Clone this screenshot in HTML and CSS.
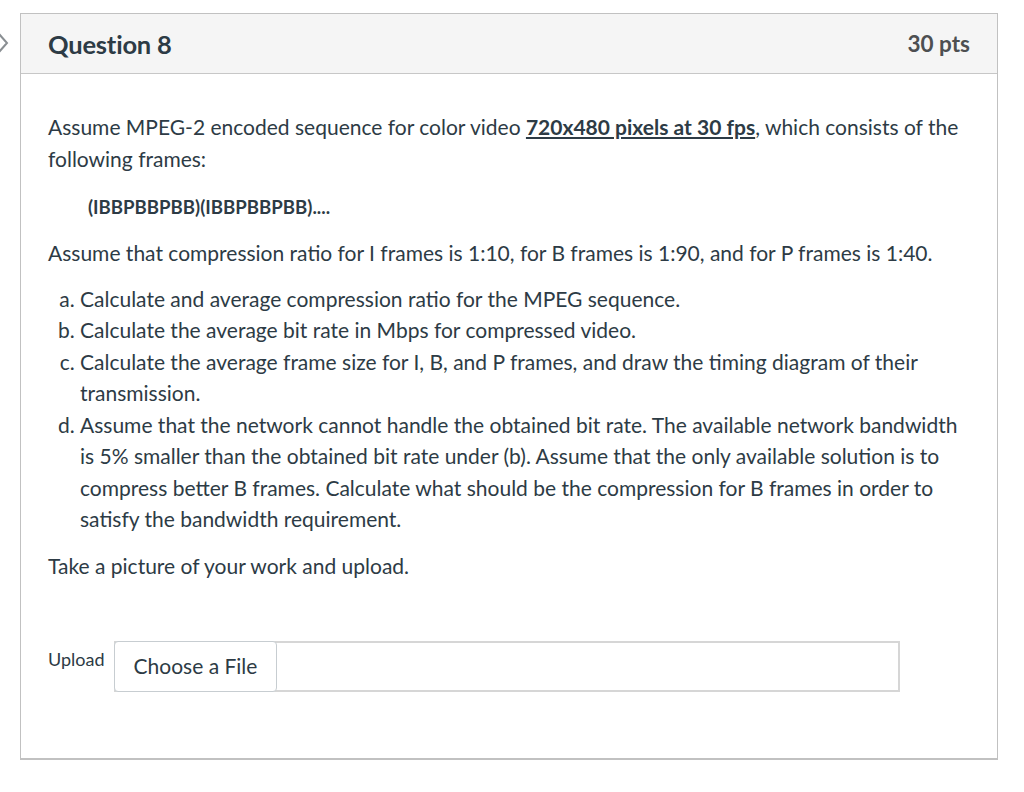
FILE: index.html
```html
<!DOCTYPE html>
<html>
<head>
<meta charset="utf-8">
<link rel="stylesheet" href="styles.css">
</head>
<body>
<div class="page">
  <div class="chev">
    <svg width="12" height="22" viewBox="0 0 12 22"><path d="M1 2 L9 11 L1 20" fill="none" stroke="#8a8f93" stroke-width="2"/></svg>
  </div>
  <div class="card">
    <div class="header">
      <div class="title">Question 8</div>
      <div class="pts">30 pts</div>
    </div>
    <div class="body">
      <p class="p1">Assume MPEG-2 encoded sequence for color video <a class="lnk">720x480 pixels at 30 fps</a>, which consists of the following frames:</p>
      <p class="seq">(IBBPBBPBB)(IBBPBBPBB)....</p>
      <p class="p2">Assume that compression ratio for I frames is 1:10, for B frames is 1:90, and for P frames is 1:40.</p>
      <ol class="list">
        <li>Calculate and average compression ratio for the MPEG sequence.</li>
        <li>Calculate the average bit rate in Mbps for compressed video.</li>
        <li>Calculate the average frame size for I, B, and P frames, and draw the timing diagram of their transmission.</li>
        <li>Assume that the network cannot handle the obtained bit rate. The available network bandwidth is 5% smaller than the obtained bit rate under (b). Assume that the only available solution is to compress better B frames. Calculate what should be the compression for B frames in order to satisfy the bandwidth requirement.</li>
      </ol>
      <p class="p3">Take a picture of your work and upload.</p>
      <div class="upload">
        <div class="ulabel">Upload</div>
        <div class="ufield"><div class="ubtn">Choose a File</div></div>
      </div>
    </div>
  </div>
</div>
</body>
</html>
```
FILE: styles.css
```css
html, body { margin: 0; padding: 0; background: #fff; }
body { font-family: Lato, "Liberation Sans", sans-serif; color: #2d3b45; }
.page { display: flex; align-items: flex-start; padding-top: 13px; }
.chev { width: 20px; height: 60px; display: flex; align-items: center; }
.chev svg { margin-left: -2px; }
.card { width: 978px; border: 1px solid #c1c1c1; border-bottom-width: 2px; height: 747px; box-sizing: border-box; }
.header { height: 60px; box-sizing: border-box; background: #f5f5f5; border-bottom: 1px solid #c7c7c7; display: flex; align-items: center; justify-content: space-between; padding: 0 27px 0 27px; }
.title { font-size: 25.5px; font-weight: 700; color: #2d3b45; letter-spacing: -0.2px; }
.pts { font-size: 22.5px; font-weight: 700; color: #4d4f51; }
.body { padding: 37px 27px 0 27px; font-size: 21px; line-height: 31.5px; }
.body p { margin: 0; }
.lnk { font-weight: 700; text-decoration: underline; color: #2d3b45; }
.seq { font-weight: 700; padding-left: 40px; font-size: 18.6px; margin-top: 17.5px !important; }
.p2 { margin-top: 13.5px !important; }
.list { margin: 14.5px 0 15.5px 0; padding-left: 32px; list-style-type: lower-alpha; }
.upload { display: flex; align-items: flex-start; margin-top: 59px; }
.ulabel { font-size: 18px; line-height: 24px; padding-top: 6px; width: 66px; }
.ufield { width: 786px; height: 51px; border: 2px solid #d6d6d6; box-sizing: border-box; position: relative; }
.ubtn { position: absolute; left: -2px; top: -2px; height: 51px; width: 163px; box-sizing: border-box; border: 1px solid #c7cdd1; border-radius: 4px; background: #fff; display: flex; align-items: center; justify-content: center; font-size: 21px; color: #2d3b45; }
```
